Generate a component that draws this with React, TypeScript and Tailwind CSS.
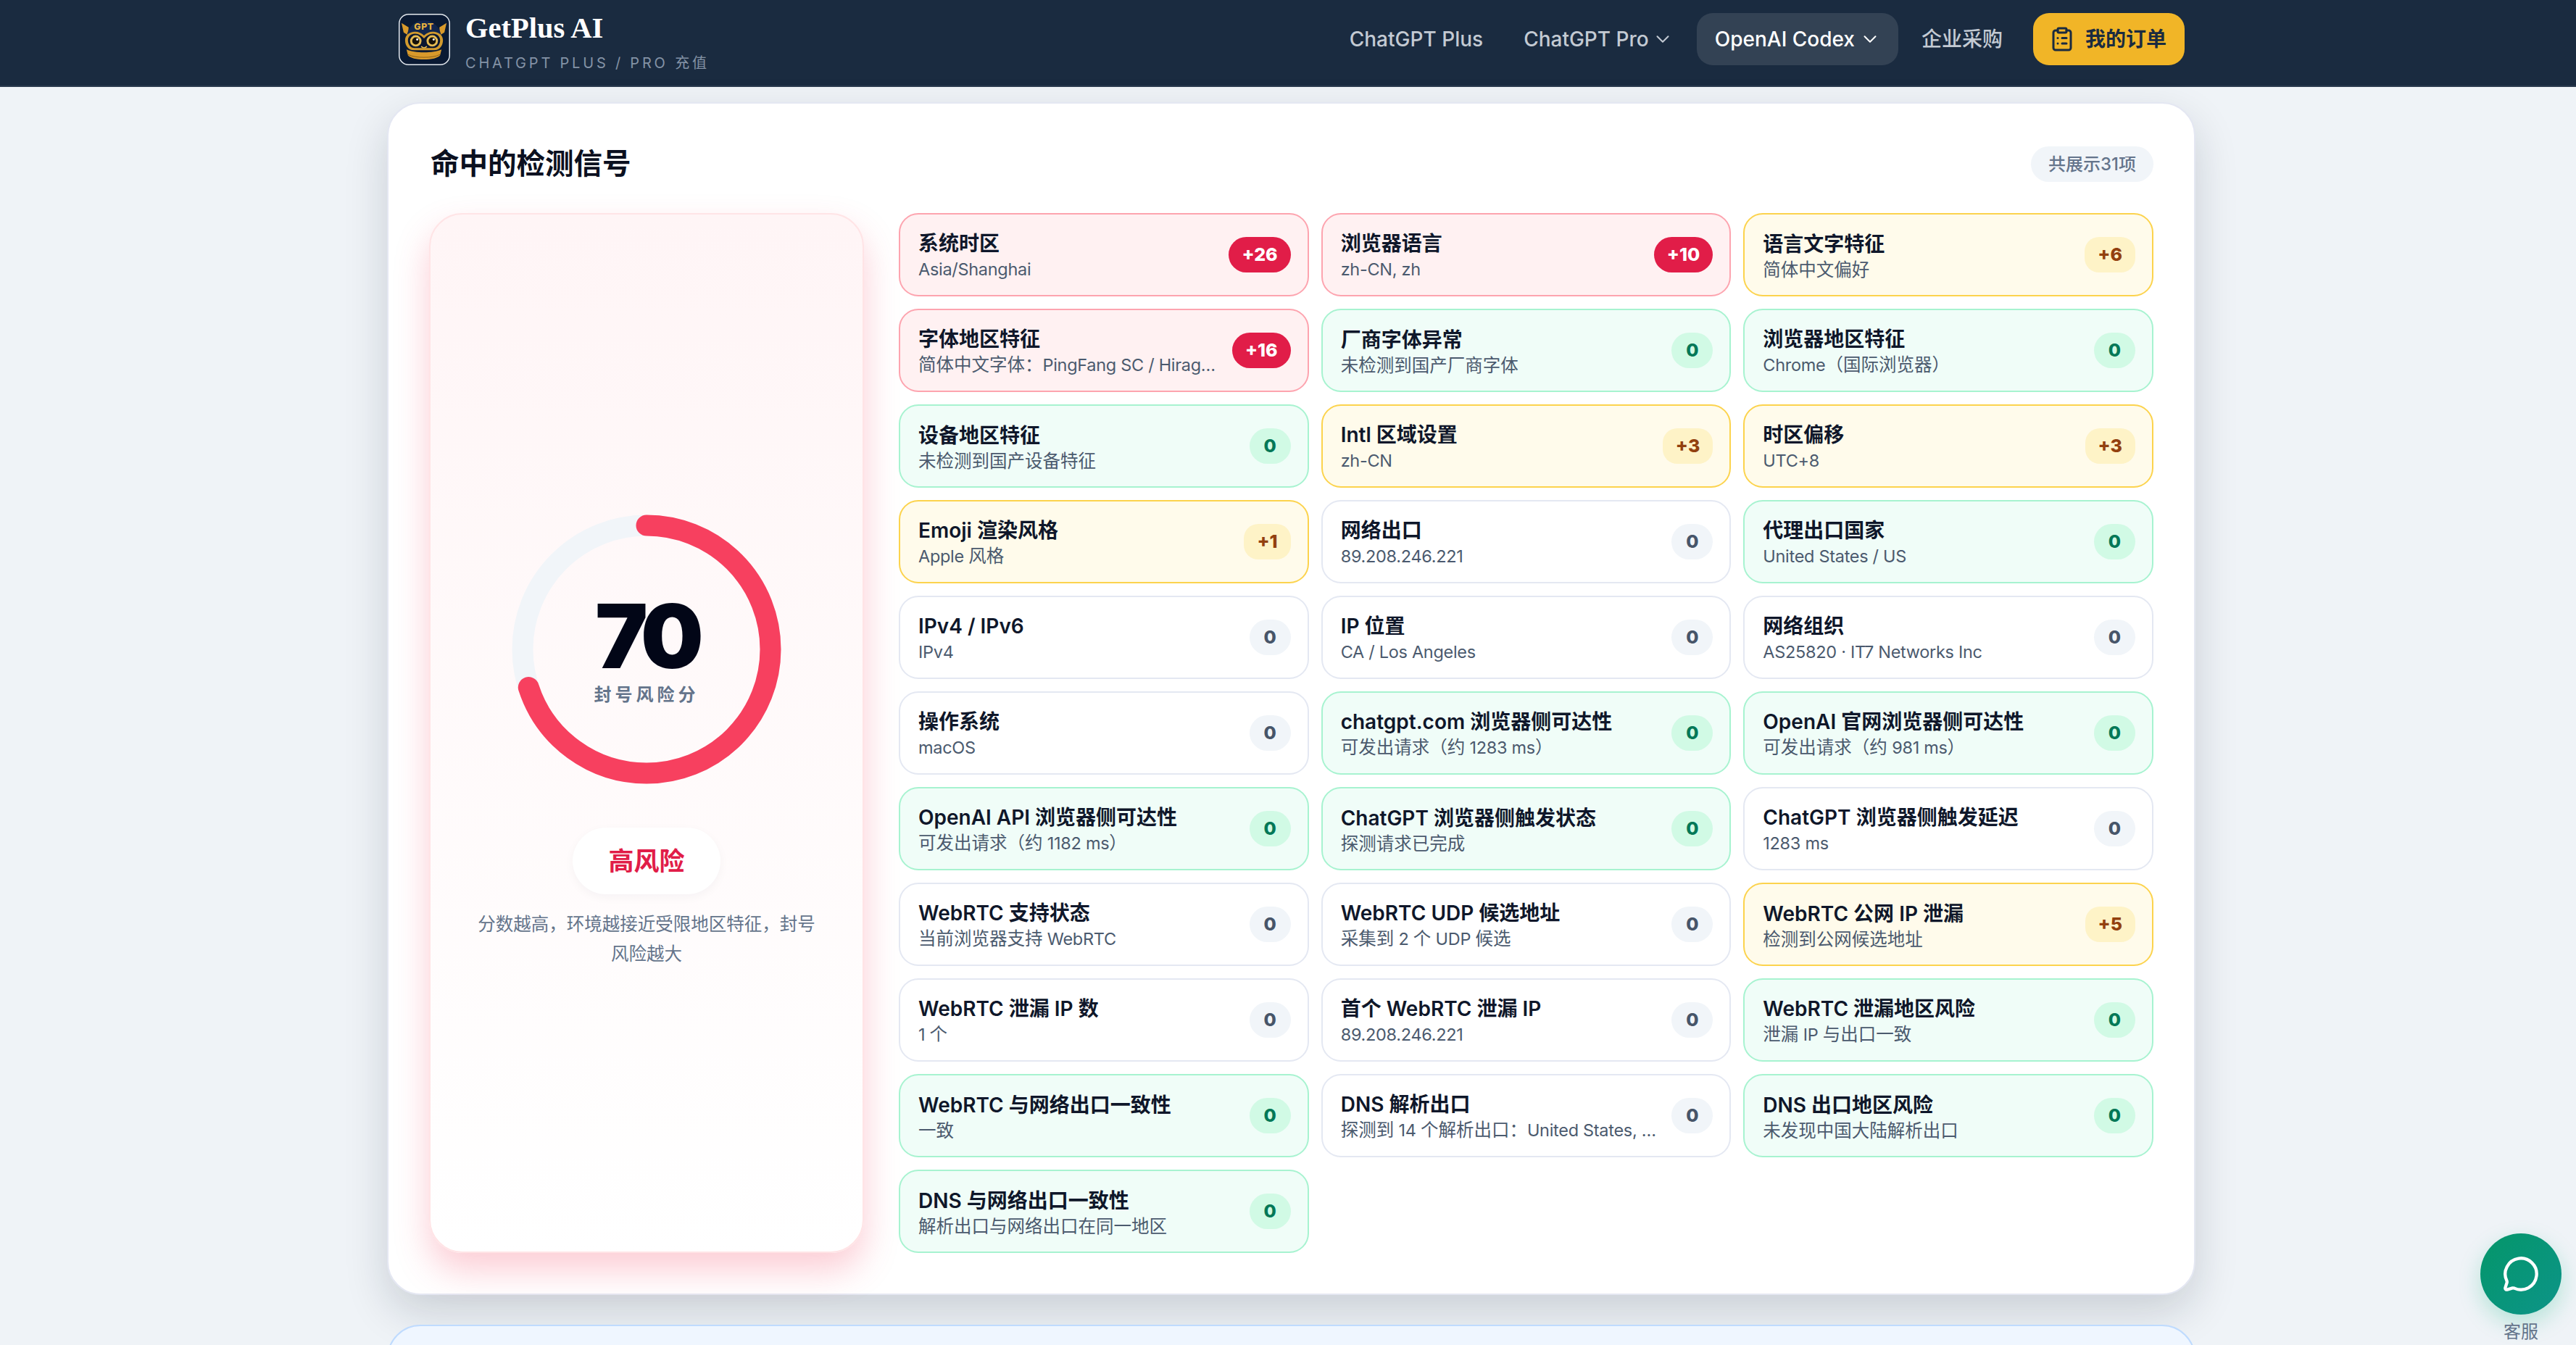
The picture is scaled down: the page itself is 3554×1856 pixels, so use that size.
import { ChevronDown, ClipboardList, MessageCircle } from "lucide-react";

type Tone = "red" | "amber" | "green" | "plain";

const rows: [string, string, string, Tone][] = [
  ["系统时区", "Asia/Shanghai", "+26", "red"],
  ["浏览器语言", "zh-CN, zh", "+10", "red"],
  ["语言文字特征", "简体中文偏好", "+6", "amber"],
  ["字体地区特征", "简体中文字体：PingFang SC / Hirag…", "+16", "red"],
  ["厂商字体异常", "未检测到国产厂商字体", "0", "green"],
  ["浏览器地区特征", "Chrome（国际浏览器）", "0", "green"],
  ["设备地区特征", "未检测到国产设备特征", "0", "green"],
  ["Intl 区域设置", "zh-CN", "+3", "amber"],
  ["时区偏移", "UTC+8", "+3", "amber"],
  ["Emoji 渲染风格", "Apple 风格", "+1", "amber"],
  ["网络出口", "89.208.246.221", "0", "plain"],
  ["代理出口国家", "United States / US", "0", "green"],
  ["IPv4 / IPv6", "IPv4", "0", "plain"],
  ["IP 位置", "CA / Los Angeles", "0", "plain"],
  ["网络组织", "AS25820 · IT7 Networks Inc", "0", "plain"],
  ["操作系统", "macOS", "0", "plain"],
  ["chatgpt.com 浏览器侧可达性", "可发出请求（约 1283 ms）", "0", "green"],
  ["OpenAI 官网浏览器侧可达性", "可发出请求（约 981 ms）", "0", "green"],
  ["OpenAI API 浏览器侧可达性", "可发出请求（约 1182 ms）", "0", "green"],
  ["ChatGPT 浏览器侧触发状态", "探测请求已完成", "0", "green"],
  ["ChatGPT 浏览器侧触发延迟", "1283 ms", "0", "plain"],
  ["WebRTC 支持状态", "当前浏览器支持 WebRTC", "0", "plain"],
  ["WebRTC UDP 候选地址", "采集到 2 个 UDP 候选", "0", "plain"],
  ["WebRTC 公网 IP 泄漏", "检测到公网候选地址", "+5", "amber"],
  ["WebRTC 泄漏 IP 数", "1 个", "0", "plain"],
  ["首个 WebRTC 泄漏 IP", "89.208.246.221", "0", "plain"],
  ["WebRTC 泄漏地区风险", "泄漏 IP 与出口一致", "0", "green"],
  ["WebRTC 与网络出口一致性", "一致", "0", "green"],
  ["DNS 解析出口", "探测到 14 个解析出口：United States, …", "0", "plain"],
  ["DNS 出口地区风险", "未发现中国大陆解析出口", "0", "green"],
  ["DNS 与网络出口一致性", "解析出口与网络出口在同一地区", "0", "green"],
];

const cardTone: Record<Tone, string> = {
  red: "bg-[#fff1f2] border-[#fda4af]",
  amber: "bg-[#fffbeb] border-[#fcd34d]",
  green: "bg-[#f0fdf8] border-[#a7f3d0]",
  plain: "bg-white border-[#e4e8f2]",
};

const badgeTone: Record<Tone, string> = {
  red: "bg-[#e11d48] text-white rounded-full",
  amber: "bg-[#fef3c7] text-[#92400e] rounded-[20px]",
  green: "bg-[#d1fae5] text-[#047857] rounded-full",
  plain: "bg-[#f1f5f9] text-[#475569] rounded-full",
};

const Logo = () => (
  <svg viewBox="0 0 72 72" className="h-[71px] w-[71px] shrink-0">
    <rect x="0.75" y="0.75" width="70.5" height="70.5" rx="13" fill="#0a1a33" stroke="#e3e8ee" strokeWidth="1.5" />
    {/* horns */}
    <path d="M4 13l10 6-1 11-6-4zM67 13l-10 6 1 11 6-4z" fill="#d99a2b" />
    {/* helmet */}
    <path d="M11 36c0-16 11-27 24.500-27S60 20 60 36v6H11z" fill="#12264d" />
    <text x="35.500" y="22" textAnchor="middle" fontSize="12.500" fontWeight="800" letterSpacing="0.6" fill="#e8b33f" fontFamily="Inter, sans-serif">GPT</text>
    {/* goggles */}
    <path d="M9 37c0-7 6-12 14-12 5 0 9 2 12.500 5.500C39 27 43 25 48 25c8 0 14 5 14 12 0 8-5 14-12 14H21C14 51 9 45 9 37z" fill="#d19a2e" />
    <path d="M13 37c0-5 4-9 10-9 5 0 9 3 12.500 6.500C39 31 43 28 48 28c6 0 10 4 10 9 0 6-4 11-9 11H22c-5 0-9-5-9-11z" fill="#0b1730" />
    <circle cx="24" cy="38" r="8" fill="#e6bb52" />
    <circle cx="47" cy="38" r="8" fill="#e6bb52" />
    <circle cx="24" cy="38" r="5" fill="#17120a" />
    <circle cx="47" cy="38" r="5" fill="#17120a" />
    <circle cx="26" cy="36" r="1.500" fill="#fff" />
    <circle cx="49" cy="36" r="1.500" fill="#fff" />
    <path d="M32 46c2 2 5 2 7 0" fill="none" stroke="#e6bb52" strokeWidth="1.500" strokeLinecap="round" />
    {/* crown band */}
    <path d="M11 50c6 3 15 4 24.500 4S54 53 60 50l-2 8c-3 4-12 6-22.500 6S16 62 13 58z" fill="#d99a2b" />
    <path d="M13 57c6 3 14 4 22.500 4S52 60 58 57" fill="none" stroke="#8a5f16" strokeWidth="1" />
  </svg>
);

const Header = () => (
  <header className="h-[120px] border-b-2 border-[#2b3b4f] bg-[#1a2b40]">
    <div className="ml-[536px] flex h-[108px] w-[2491px] items-center justify-between pl-[14px] pr-[13px]">
      <div className="flex items-center gap-[21px]">
        <Logo />
        <div className="pt-[8px]">
          <div className="font-['Liberation_Serif',serif] text-[40.500px] font-bold leading-[44px] text-white">GetPlus AI</div>
          <div className="mt-[14px] text-[20px] leading-[24px] tracking-[3.800px] text-[#8493a6]">CHATGPT PLUS / PRO 充值</div>
        </div>
      </div>
      <nav className="flex items-center text-[28px] font-medium text-[#c3cad3]">
        <a className="mr-[56px]">ChatGPT Plus</a>
        <a className="mr-[32px] flex items-center gap-[4px]">
          ChatGPT Pro
          <ChevronDown className="h-[30px] w-[30px]" strokeWidth={1.6} />
        </a>
        <a className="flex h-[72px] items-center gap-[6px] rounded-[22px] bg-[#334254] pl-[25px] pr-[24px] text-white">
          OpenAI Codex
          <ChevronDown className="h-[30px] w-[30px]" strokeWidth={1.6} />
        </a>
        <a className="ml-[32px]">企业采购</a>
        <button className="ml-[42px] flex h-[72px] items-center gap-[14px] rounded-[22px] bg-[#f1b527] pl-[22px] pr-[25px] font-semibold text-[#1a2b40]">
          <ClipboardList className="h-[36px] w-[36px]" />
          我的订单
        </button>
      </nav>
    </div>
  </header>
);

const Gauge = () => (
  <div className="relative h-[372px] w-[372px]">
    <svg viewBox="0 0 372 372" className="h-full w-full">
      <circle cx="186" cy="186" r="171" fill="none" stroke="#f1f5f9" strokeWidth="29" />
      <circle
        cx="186"
        cy="186"
        r="171"
        fill="none"
        stroke="#f7405f"
        strokeWidth="29"
        strokeLinecap="round"
        strokeDasharray="752 1075"
        transform="rotate(-90 186 186)"
      />
    </svg>
    <div className="absolute inset-0 flex flex-col items-center justify-center">
      <div className="text-[122px] font-black leading-[122px] tracking-[-8px] text-[#020617]">70</div>
      <div className="mt-[4px] text-[24px] font-semibold leading-[32px] tracking-[5px] text-[#64748b]">封号风险分</div>
    </div>
  </div>
);

const ScorePanel = () => (
  <aside className="flex w-[600px] shrink-0 flex-col items-center rounded-[46px] border-2 border-[#ffe4e6] bg-gradient-to-b from-[#fff5f6] to-white pt-[414px] shadow-[0_24px_48px_rgba(244,63,94,0.26)]">
    <Gauge />
    <div className="mt-[60px] flex h-[92px] w-[204px] items-center justify-center rounded-full bg-white text-[35px] font-semibold text-[#e11d48] shadow-[0_4px_14px_rgba(15,23,42,0.04)]">
      高风险
    </div>
    <p className="mt-[21px] w-[480px] text-center text-[24.500px] leading-[41px] text-[#64748b]">
      分数越高，环境越接近受限地区特征，封号风险越大
    </p>
  </aside>
);

// latin runs sit a bit narrower than the CJK ones in the reference
const SubText = ({ text }: { text: string }) => (
  <>
    {text.split(/([\x20-\x7e·…]+)/).map((part, i) =>
      i % 2 === 1 ? (
        <span key={i} className="text-[23.500px] tracking-[-0.3px]">
          {part}
        </span>
      ) : (
        part
      ),
    )}
  </>
);

const SignalCard = ({ title, sub, score, tone }: { title: string; sub: string; score: string; tone: Tone }) => (
  <div className={`flex h-[115px] items-center gap-[10px] rounded-[27px] border-2 pl-[25px] pr-[23px] ${cardTone[tone]}`}>
    <div className="min-w-0 flex-1 pt-[4px]">
      <div className="truncate text-[28px] font-semibold leading-[36px] text-[#0f172a]">{title}</div>
      <div className="truncate text-[24.500px] leading-[34px] text-[#4b5a6e]">
        <SubText text={sub} />
      </div>
    </div>
    <span className={`flex h-[49px] min-w-[57px] shrink-0 items-center justify-center px-[18px] text-[25px] font-extrabold ${badgeTone[tone]}`}>
      {score}
    </span>
  </div>
);

export default function App() {
  return (
    <div className="relative h-[1856px] overflow-hidden bg-[#eff3f7] font-['Inter','Noto_Sans_CJK_SC',sans-serif]">
      <Header />
      <main className="ml-[534px] w-[2495px] pt-[21px]">
        <section className="rounded-[46px] border-2 border-[#e4e7f2] bg-white pb-[56px] pl-[56px] pr-[56px] pt-[59px] shadow-[0_24px_60px_rgba(15,23,42,0.16)]">
          <div className="mb-[43px] flex h-[49px] items-center justify-between pl-[2px]">
            <h2 className="text-[39.500px] font-bold text-[#0b1020]">命中的检测信号</h2>
            <span className="flex h-[49px] items-center rounded-full bg-[#f1f5f9] px-[24px] text-[24px] font-medium text-[#64748b]">
              共展示31项
            </span>
          </div>
          <div className="flex gap-[48px]">
            <ScorePanel />
            <div className="grid flex-1 grid-cols-3 content-start gap-x-[17px] gap-y-[17px]">
              {rows.map(([title, sub, score, tone]) => (
                <SignalCard key={title} title={title} sub={sub} score={score} tone={tone} />
              ))}
            </div>
          </div>
        </section>
        <section className="mt-[41px] h-[200px] rounded-[46px] border-2 border-[#bfdbfe] bg-[#eff6ff]" />
      </main>
      <div className="absolute right-[20px] top-[1702px] flex flex-col items-center">
        <div className="flex h-[112px] w-[112px] items-center justify-center rounded-full bg-gradient-to-br from-[#059669] to-[#0d9488] text-white shadow-[0_12px_30px_rgba(16,185,129,0.25)]">
          <MessageCircle className="h-[52px] w-[52px]" strokeWidth={2} />
        </div>
        <span className="mt-[8px] text-[24px] leading-[32px] text-[#64748b]">客服</span>
      </div>
    </div>
  );
}
